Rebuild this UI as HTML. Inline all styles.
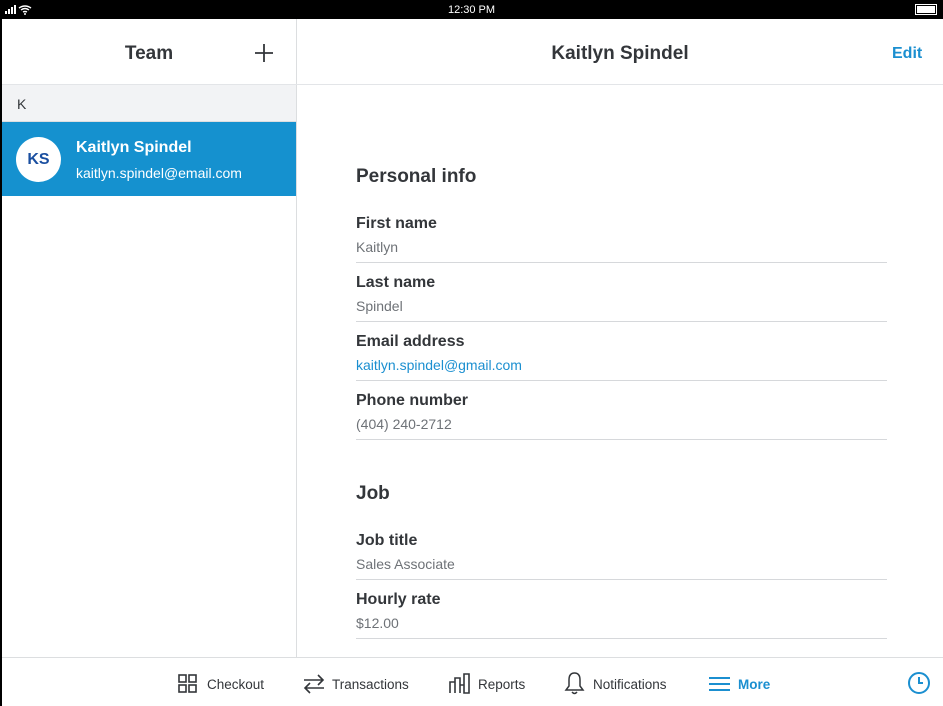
<!DOCTYPE html>
<html><head><style>
*{margin:0;padding:0;box-sizing:border-box}
body{width:943px;height:706px;overflow:hidden;background:#fff;font-family:"Liberation Sans",sans-serif;color:#33363a;position:relative}
.a{position:absolute}
.sb{left:0;top:0;width:943px;height:19px;background:#000;color:#fff;font-size:11px}
.lbl{font-size:16px;font-weight:bold;color:#33363a;left:356px}
.val{font-size:14px;color:#6e7277;left:356px}
.ln{left:356px;width:531px;height:1px;background:#d6d8db}
.h{font-size:19px;font-weight:bold;color:#33363a;left:356px}
.tab{top:677px;font-size:13.5px;color:#33363a}
</style></head><body>
<div class="a sb">
 <svg class="a" style="left:5px;top:5px" width="40" height="10"><rect x="0" y="6" width="2" height="3" fill="#fff"/><rect x="3" y="4" width="2" height="5" fill="#fff"/><rect x="6" y="2" width="2" height="7" fill="#fff"/><rect x="9" y="0" width="2" height="9" fill="#fff"/><path d="M14 3 Q20 -1 26 3 M16 5 Q20 2 24 5 M18 7 Q20 6 22 7" stroke="#fff" stroke-width="1.4" fill="none"/><circle cx="20" cy="9" r="1" fill="#fff"/></svg>
 <div class="a" style="left:0;width:943px;top:4px;text-align:center;font-size:11px">12:30 PM</div>
 <div class="a" style="left:915px;top:4px;width:22px;height:11px;border:1px solid #fff;background:#fff;outline:1px solid #000;outline-offset:-2px"></div>
</div>
<div class="a" style="left:0;top:19px;width:2px;height:687px;background:#000"></div>
<div class="a" style="left:296px;top:19px;width:1px;height:638px;background:#dcdee0"></div>
<div class="a" style="left:2px;top:84px;width:941px;height:1px;background:#e3e5e8"></div>
<div class="a" style="left:2px;top:43px;width:294px;text-align:center;font-size:19px;font-weight:bold;color:#33363a">Team</div>
<svg class="a" style="left:254px;top:43px" width="20" height="20"><path d="M10 1V19M1 10H19" stroke="#33363a" stroke-width="1.8"/></svg>
<div class="a" style="left:2px;top:85px;width:294px;height:37px;background:#f2f3f5;border-bottom:1px solid #dcdee0"></div>
<div class="a" style="left:17px;top:96px;font-size:14px;color:#33363a">K</div>
<div class="a" style="left:2px;top:122px;width:294px;height:74px;background:#1591cf"></div>
<div class="a" style="left:16px;top:137px;width:45px;height:45px;border-radius:50%;background:#fff;color:#1a4fa0;font-size:16px;font-weight:bold;text-align:center;line-height:45px">KS</div>
<div class="a" style="left:76px;top:139px;font-size:16px;font-weight:bold;color:#fff">Kaitlyn Spindel</div>
<div class="a" style="left:76px;top:165px;font-size:14px;color:#fff">kaitlyn.spindel@email.com</div>
<div class="a" style="left:297px;top:43px;width:646px;text-align:center;font-size:19px;font-weight:bold;color:#33363a">Kaitlyn Spindel</div>
<div class="a" style="left:892px;top:45px;font-size:16px;font-weight:bold;color:#1b8fd0">Edit</div>
<div class="a h" style="top:166px">Personal info</div>
<div class="a lbl" style="top:215px">First name</div><div class="a val" style="top:239px">Kaitlyn</div><div class="a ln" style="top:262px"></div>
<div class="a lbl" style="top:274px">Last name</div><div class="a val" style="top:298px">Spindel</div><div class="a ln" style="top:321px"></div>
<div class="a lbl" style="top:333px">Email address</div><div class="a val" style="top:357px;color:#1b8fd0">kaitlyn.spindel@gmail.com</div><div class="a ln" style="top:380px"></div>
<div class="a lbl" style="top:392px">Phone number</div><div class="a val" style="top:416px">(404) 240-2712</div><div class="a ln" style="top:439px"></div>
<div class="a h" style="top:483px">Job</div>
<div class="a lbl" style="top:532px">Job title</div><div class="a val" style="top:556px">Sales Associate</div><div class="a ln" style="top:579px"></div>
<div class="a lbl" style="top:591px">Hourly rate</div><div class="a val" style="top:615px">$12.00</div><div class="a ln" style="top:638px"></div>
<div class="a" style="left:2px;top:657px;width:941px;height:1px;background:#dcdee0"></div>
<svg class="a" style="left:178px;top:674px" width="20" height="20" fill="none" stroke="#33363a" stroke-width="1.6"><rect x="1" y="1" width="7" height="7"/><rect x="11" y="1" width="7" height="7"/><rect x="1" y="11" width="7" height="7"/><rect x="11" y="11" width="7" height="7"/></svg>
<div class="a tab" style="left:207px">Checkout</div>
<svg class="a" style="left:303px;top:674px" width="22" height="20" fill="none" stroke="#33363a" stroke-width="1.6"><path d="M1 6H20M15 1L20 6L15 11M21 14H2M7 9L2 14L7 19"/></svg>
<div class="a tab" style="left:332px">Transactions</div>
<svg class="a" style="left:449px;top:673px" width="21" height="21" fill="none" stroke="#33363a" stroke-width="1.6"><path d="M1 20V9H6V20M6 20V5H11V20M11 20V12H15V20M15 20V1H20V20Z"/></svg>
<div class="a tab" style="left:478px">Reports</div>
<svg class="a" style="left:564px;top:671px" width="21" height="24" fill="none" stroke="#33363a" stroke-width="1.5"><path d="M10.5 2C6.5 2 5 5 5 9V15L2 19H19L16 15V9C16 5 14.5 2 10.5 2ZM8 21Q10.5 24 13 21"/></svg>
<div class="a tab" style="left:593px">Notifications</div>
<svg class="a" style="left:709px;top:676px" width="21" height="16" stroke="#1b8fd0" stroke-width="2"><path d="M0 2H21M0 8H21M0 14H21"/></svg>
<div class="a tab" style="left:738px;color:#1b8fd0;font-weight:bold">More</div>
<svg class="a" style="left:907px;top:671px" width="24" height="24" fill="none" stroke="#1b8fd0" stroke-width="2"><circle cx="12" cy="12" r="10"/><path d="M12 6V12H16"/></svg>
</body></html>
